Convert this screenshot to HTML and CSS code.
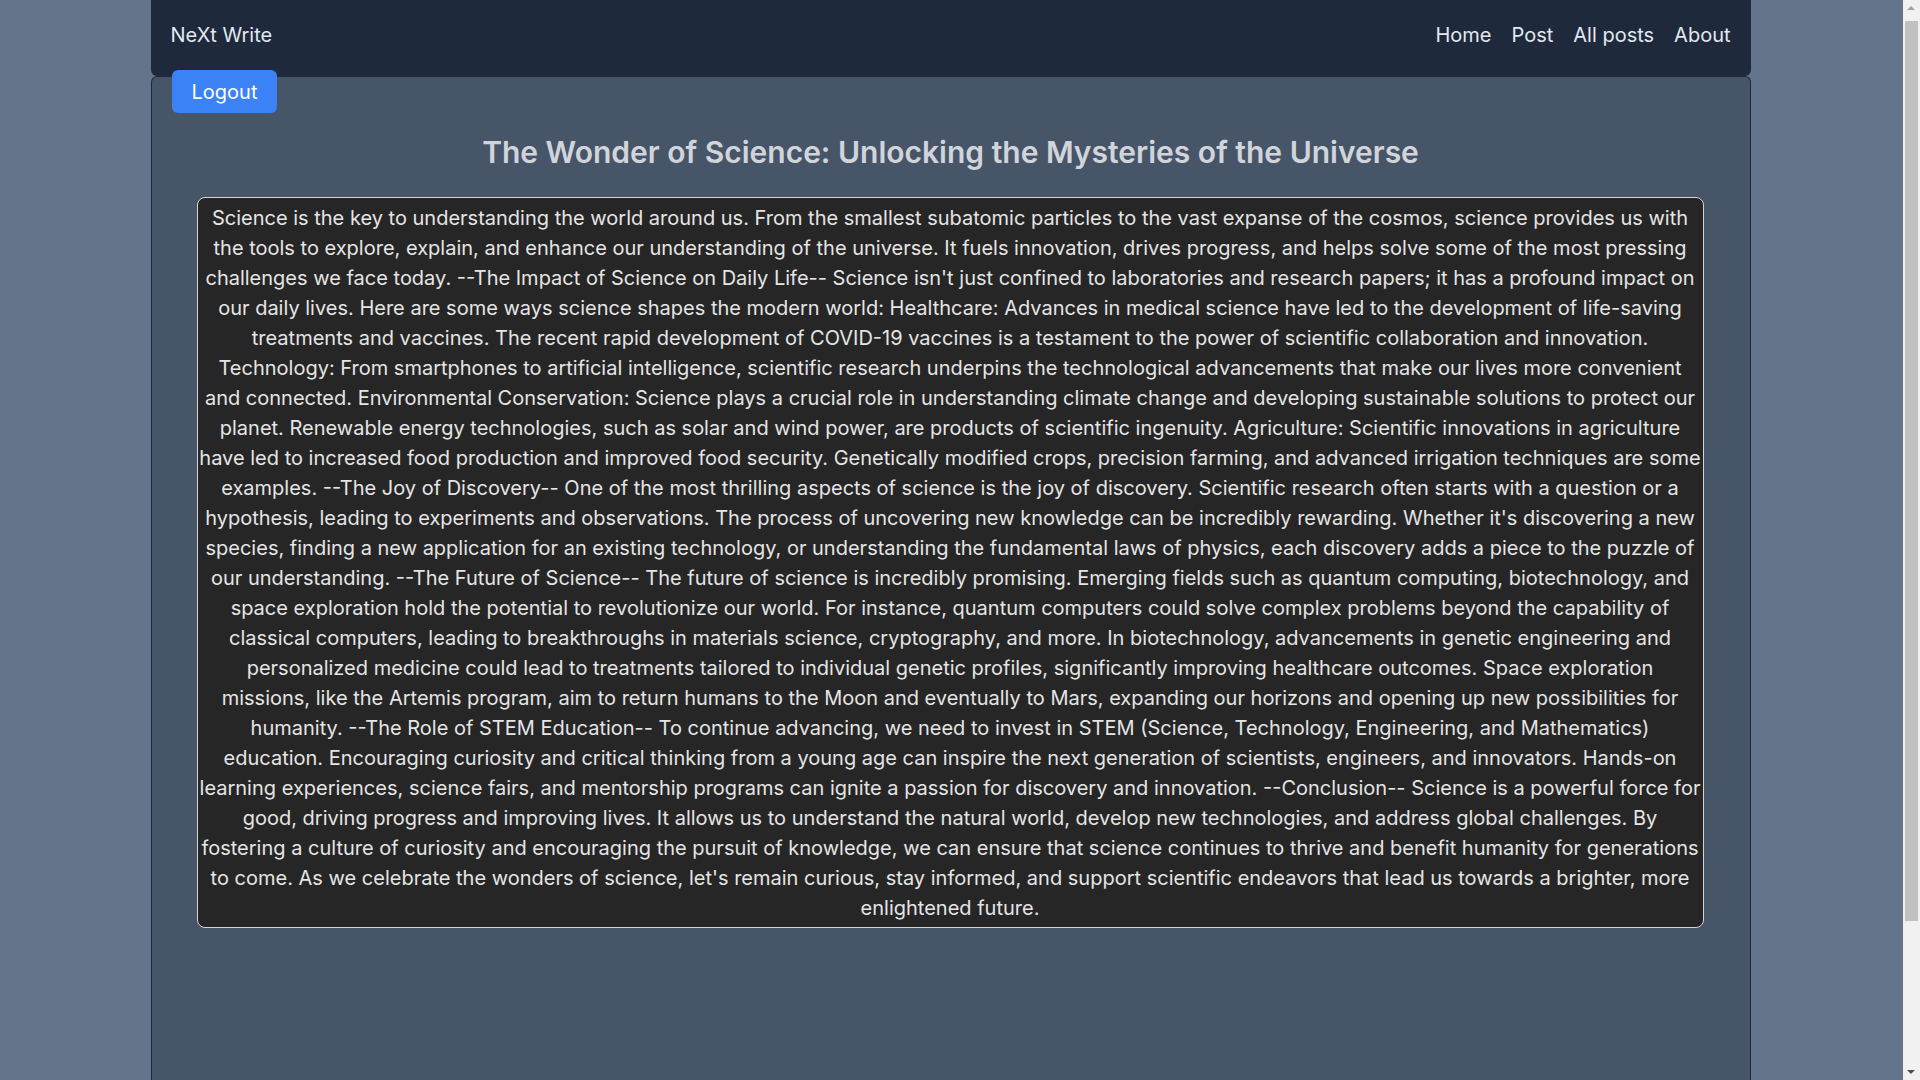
FILE: index.html
```html
<!DOCTYPE html>
<html lang="en">
<head>
<meta charset="utf-8">
<title>NeXt Write</title>
<link rel="stylesheet" href="styles.css">
</head>
<body>
<div class="wrap">
  <nav class="navbar">
    <div class="brand">NeXt Write</div>
    <div class="links">
      <a href="#">Home</a>
      <a href="#">Post</a>
      <a href="#">All posts</a>
      <a href="#">About</a>
    </div>
  </nav>
  <main class="panel">
    <div class="actions"><button class="logout">Logout</button></div>
    <h1 class="title">The Wonder of Science: Unlocking the Mysteries of the Universe</h1>
    <div class="content">Science is the key to understanding the world around us. From the smallest subatomic particles to the vast expanse of the cosmos, science provides us with the tools to explore, explain, and enhance our understanding of the universe. It fuels innovation, drives progress, and helps solve some of the most pressing challenges we face today. --The Impact of Science on Daily Life-- Science isn't just confined to laboratories and research papers; it has a profound impact on our daily lives. Here are some ways science shapes the modern world: Healthcare: Advances in medical science have led to the development of life-saving treatments and vaccines. The recent rapid development of COVID-19 vaccines is a testament to the power of scientific collaboration and innovation. Technology: From smartphones to artificial intelligence, scientific research underpins the technological advancements that make our lives more convenient and connected. Environmental Conservation: Science plays a crucial role in understanding climate change and developing sustainable solutions to protect our planet. Renewable energy technologies, such as solar and wind power, are products of scientific ingenuity. Agriculture: Scientific innovations in agriculture have led to increased food production and improved food security. Genetically modified crops, precision farming, and advanced irrigation techniques are some examples. --The Joy of Discovery-- One of the most thrilling aspects of science is the joy of discovery. Scientific research often starts with a question or a hypothesis, leading to experiments and observations. The process of uncovering new knowledge can be incredibly rewarding. Whether it's discovering a new species, finding a new application for an existing technology, or understanding the fundamental laws of physics, each discovery adds a piece to the puzzle of our understanding. --The Future of Science-- The future of science is incredibly promising. Emerging fields such as quantum computing, biotechnology, and space exploration hold the potential to revolutionize our world. For instance, quantum computers could solve complex problems beyond the capability of classical computers, leading to breakthroughs in materials science, cryptography, and more. In biotechnology, advancements in genetic engineering and personalized medicine could lead to treatments tailored to individual genetic profiles, significantly improving healthcare outcomes. Space exploration missions,&nbsp;like the Artemis program, aim to return humans to the Moon and eventually to Mars, expanding our horizons and opening up new possibilities for humanity. --The Role of STEM Education-- To continue advancing, we need to invest in STEM (Science, Technology, Engineering, and Mathematics) education. Encouraging curiosity and critical thinking from a young age can inspire the next generation of scientists, engineers, and innovators. Hands-on learning experiences, science fairs, and mentorship programs can ignite a passion for discovery and innovation. --Conclusion-- Science is a powerful force for good, driving progress and improving lives. It allows us to understand the natural world, develop new technologies, and address global challenges. By fostering a culture of curiosity and encouraging the pursuit of knowledge, we can ensure that science continues to thrive and benefit humanity for generations to come. As we celebrate the wonders of science, let's remain curious, stay informed, and support scientific endeavors that lead us towards a brighter, more enlightened future.</div>
  </main>
</div>
<div class="scrollbar" aria-hidden="true">
  <div class="sb-arrow sb-up"></div>
  <div class="sb-track"><div class="sb-thumb"></div></div>
  <div class="sb-arrow sb-down"></div>
</div>
</body>
</html>
```
FILE: styles.css
```css
* { box-sizing: border-box; }
html, body {
  margin: 0;
  padding: 0;
}
html { overflow: hidden; }
body {
  background: #64748b;
  font-family: Inter, "Liberation Sans", sans-serif;
  color: #e2e8f0;
  padding-right: 17px;
}
.wrap {
  max-width: 1600px;
  margin: 0 auto;
  position: relative;
  left: -1px;
}
.navbar {
  background: #1e293b;
  height: 76px;
  padding: 21px 20px 27px 20px;
  display: flex;
  justify-content: space-between;
  align-items: flex-start;
  border-radius: 0 0 6px 6px;
}
.brand {
  font-size: 20px;
  line-height: 28px;
  color: #e2e8f0;
}
.links {
  display: flex;
  gap: 20px;
}
.links a {
  font-size: 20px;
  line-height: 28px;
  color: #e2e8f0;
  text-decoration: none;
}
.panel {
  background: #475569;
  border: 1px solid #1e293b;
  border-bottom: none;
  border-radius: 6px 6px 0 0;
  min-height: calc(100vh + 90px);
  padding: 0 0 40px 0;
}
.actions {
  padding: 0 20px;
  margin-top: -7px;
}
.logout {
  position: relative;
  background: #3b82f6;
  color: #ffffff;
  border: none;
  border-radius: 6px;
  font-family: Inter, "Liberation Sans", sans-serif;
  font-size: 20px;
  line-height: 28px;
  padding: 8px 20px 7px;
  cursor: pointer;
}
.title {
  margin: 21px 0 27px;
  text-align: center;
  font-size: 30px;
  line-height: 36px;
  font-weight: 600;
  color: #d1d5db;
}
.content {
  margin: 0 46px 0 45px;
  background: #262626;
  border: 1px solid #d4d4d4;
  border-radius: 8px;
  padding: 5px 1.5px 4px;
  text-align: center;
  font-size: 20px;
  line-height: 30px;
  color: #e5e5e5;
}
.scrollbar {
  position: fixed;
  top: 0;
  right: 0;
  width: 17px;
  height: 100vh;
  background: #f1f1f1;
  display: flex;
  flex-direction: column;
}
.sb-arrow {
  height: 17px;
  flex: none;
  position: relative;
}
.sb-up::after, .sb-down::after {
  content: "";
  position: absolute;
  left: 4px;
  border-left: 4px solid transparent;
  border-right: 4px solid transparent;
}
.sb-up::after {
  top: 6px;
  border-bottom: 4px solid #a3a3a3;
}
.sb-down::after {
  top: 7px;
  border-top: 4px solid #505050;
}
.sb-track {
  flex: 1;
  padding: 4px 2px 0;
}
.sb-thumb {
  height: 900px;
  background: #c1c1c1;
}
```
